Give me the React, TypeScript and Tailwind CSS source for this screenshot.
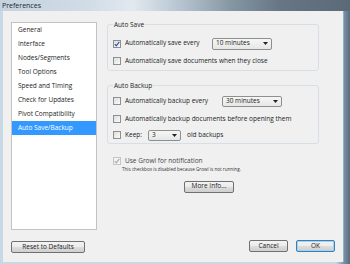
import React from "react";

function Check({ checked = false, disabled = false }: { checked?: boolean; disabled?: boolean }) {
  return (
    <span
      className={
        "w-[8px] h-[8px] shrink-0 border flex items-center justify-center " +
        (disabled
          ? "border-[#c6c6c6] bg-[#f4f4f4]"
          : "border-[#8e8f8f] bg-[linear-gradient(135deg,#dcdcdc,#fbfbfb)]")
      }
    >
      {checked && (
        <svg width="6" height="6" viewBox="0 0 6 6">
          <path
            d="M0.8 3.2 L2.3 4.8 L5.3 0.8"
            fill="none"
            stroke={disabled ? "#a8a8a8" : "#2a4fa8"}
            strokeWidth="1.1"
          />
        </svg>
      )}
    </span>
  );
}

function Drop({ w, label, h = "h-[11px]" }: { w: string; label: string; h?: string }) {
  return (
    <div
      className={
        w +
        " " +
        h +
        " shrink-0 border border-[#8e8f8f] rounded-[2px] bg-[linear-gradient(#f6f6f6,#e6e6e6)] flex items-center pl-[3px] pr-[3px]"
      }
    >
      <span className="flex-1 text-[6.5px] leading-none">{label}</span>
      <svg width="5" height="3" viewBox="0 0 5 3">
        <path d="M0 0 L5 0 L2.5 3 Z" fill="#222" />
      </svg>
    </div>
  );
}

function Btn({ w, label, def = false }: { w: string; label: string; def?: boolean }) {
  return (
    <div
      className={
        w +
        " h-[12px] rounded-[2px] border flex items-center justify-center text-[6.5px] leading-none bg-[linear-gradient(#f3f3f3_0%,#ebebeb_50%,#dddddd_51%,#cfcfcf_100%)] " +
        (def ? "border-[#3c7fb1] shadow-[inset_0_0_0_1px_#9fd3f5]" : "border-[#707070]")
      }
    >
      {label}
    </div>
  );
}

const items = [
  "General",
  "Interface",
  "Nodes/Segments",
  "Tool Options",
  "Speed and Timing",
  "Check for Updates",
  "Pivot Compatibility",
  "Auto Save/Backup",
];

export default function App() {
  return (
    <div className="w-[350px] h-[264px] flex flex-col overflow-hidden bg-[#b9cbdb] text-[#1c1c1c] font-['Segoe_UI','Open_Sans',sans-serif]">
      <div className="h-[11px] shrink-0 pl-[2px] text-[7px] leading-[11px] text-[#1b2630] bg-[linear-gradient(90deg,#c4d3df_0%,#d0dce6_25%,#e2e9ef_38%,#b4c3cf_52%,#8697a4_66%,#667684_80%,#5a6a77_100%)]">
        Preferences
      </div>
      <div className="flex-1 flex pl-[3px] pr-[6px] pb-[2px] bg-[linear-gradient(90deg,#c9d8e5_0%,#c9d8e5_96%,#7e97ad_98%,#5b6b79_100%)]">
        <div className="flex-1 bg-[#f0f0f0] flex flex-col pt-[11px] pl-[8px] pr-[8px] border-r border-[#8fb0cc]">
          <div className="flex items-start h-[208px]">
            <div className="w-[86px] h-[208px] bg-white border border-[#c3c3c3] flex flex-col">
              {items.map((t, i) => (
                <div
                  key={t}
                  className={
                    "h-[14px] shrink-0 flex items-center pl-[6px] text-[6.5px] leading-none " +
                    (i === 7 ? "bg-[#3399ff] text-white" : "")
                  }
                >
                  {t}
                </div>
              ))}
            </div>
            <div className="ml-[10px] w-[212px] -mt-[2px] flex flex-col text-[6.5px] leading-none">
              <fieldset className="border border-[#d5dfe5] rounded-[3px] px-[5px] pb-[4px]">
                <legend className="px-[1px] text-[6.5px] leading-[9px]">Auto Save</legend>
                <div className="flex items-center h-[13px] mt-[8px]">
                  <Check checked />
                  <span className="w-[91px] pl-[4px]">Automatically save every</span>
                  <Drop w="w-[60px]" h="h-[12px]" label="10 minutes" />
                </div>
                <div className="flex items-center h-[10px] mt-[6px]">
                  <Check />
                  <span className="pl-[4px]">Automatically save documents when they close</span>
                </div>
              </fieldset>
              <fieldset className="border border-[#d5dfe5] rounded-[3px] px-[5px] pb-[2px] mt-[10px]">
                <legend className="px-[1px] text-[6.5px] leading-[9px]">Auto Backup</legend>
                <div className="flex items-center h-[12px] mt-[5px]">
                  <Check />
                  <span className="w-[101px] pl-[4px]">Automatically backup every</span>
                  <Drop w="w-[60px]" label="30 minutes" />
                </div>
                <div className="flex items-center h-[10px] mt-[7px]">
                  <Check />
                  <span className="pl-[4px]">Automatically backup documents before opening them</span>
                </div>
                <div className="flex items-center h-[12px] mt-[5px]">
                  <Check />
                  <span className="w-[27px] pl-[4px]">Keep:</span>
                  <Drop w="w-[33px]" label="3" />
                  <span className="pl-[6px]">old backups</span>
                </div>
              </fieldset>
              <div className="flex items-center h-[8px] mt-[13px] ml-[6px]">
                <Check checked disabled />
                <span className="pl-[4px] text-[#444]">Use Growl for notification</span>
              </div>
              <div className="mt-[2px] ml-[15px] text-[4.6px] leading-none text-[#333]">
                This checkbox is disabled because Growl is not running.
              </div>
              <div className="mt-[9px] ml-[77px]">
                <Btn w="w-[50px]" label="More Info..." />
              </div>
            </div>
          </div>
          <div className="flex items-start mt-[11px]">
            <Btn w="w-[74px]" label="Reset to Defaults" />
            <div className="flex-1" />
            <div className="-mt-[1px] flex gap-[8px]">
              <Btn w="w-[39px]" label="Cancel" />
              <Btn w="w-[39px]" label="OK" def />
            </div>
          </div>
        </div>
      </div>
    </div>
  );
}
